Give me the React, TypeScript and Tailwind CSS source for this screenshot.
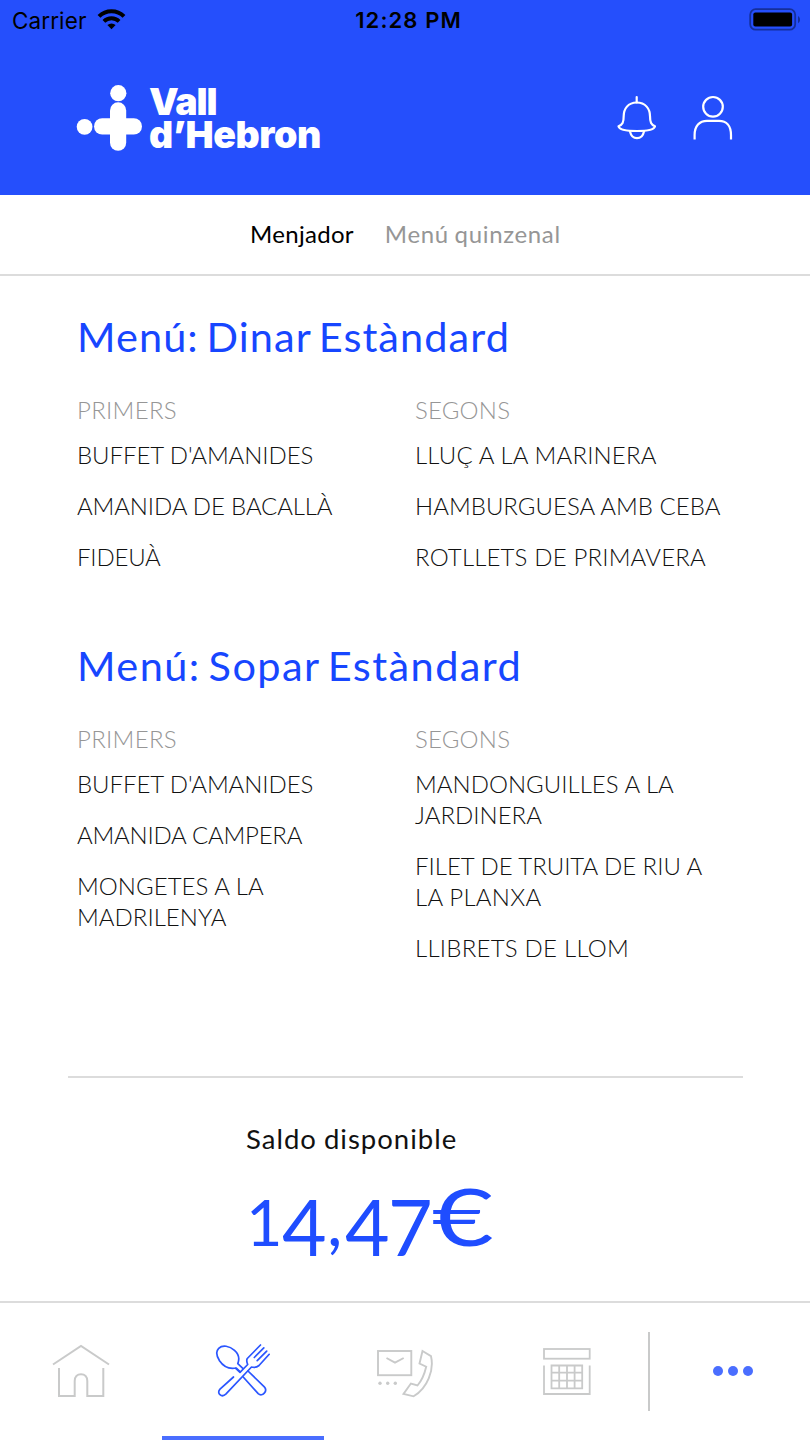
import type { ReactNode } from "react";

type Line = { text: string; cls: string };
type Dish = Line[];

type Menu = { title: string; titleCls: string; firsts: Dish[]; seconds: Dish[] };

const menus: Menu[] = [
  {
    title: "Menú: Dinar Estàndard",
    titleCls: "tracking-[1.07px] [word-spacing:-4px]",
    firsts: [
      [{ text: "BUFFET D'AMANIDES", cls: "tracking-[-0.08px]" }],
      [{ text: "AMANIDA DE BACALLÀ", cls: "tracking-[-0.14px]" }],
      [{ text: "FIDEUÀ", cls: "tracking-[-0.2px]" }],
    ],
    seconds: [
      [{ text: "LLUÇ A LA MARINERA", cls: "tracking-[0.16px]" }],
      [{ text: "HAMBURGUESA AMB CEBA", cls: "tracking-[0.02px]" }],
      [{ text: "ROTLLETS DE PRIMAVERA", cls: "tracking-[0.17px]" }],
    ],
  },
  {
    title: "Menú: Sopar Estàndard",
    titleCls: "tracking-[1.42px] [word-spacing:-4px]",
    firsts: [
      [{ text: "BUFFET D'AMANIDES", cls: "tracking-[-0.08px]" }],
      [{ text: "AMANIDA CAMPERA", cls: "tracking-[-0.24px]" }],
      [
        { text: "MONGETES A LA", cls: "tracking-[0.04px]" },
        { text: "MADRILENYA", cls: "tracking-[0.02px]" },
      ],
    ],
    seconds: [
      [
        { text: "MANDONGUILLES A LA", cls: "tracking-[0.02px]" },
        { text: "JARDINERA", cls: "tracking-[0px]" },
      ],
      [
        { text: "FILET DE TRUITA DE RIU A", cls: "tracking-[-0.02px]" },
        { text: "LA PLANXA", cls: "tracking-[0.25px]" },
      ],
      [{ text: "LLIBRETS DE LLOM", cls: "tracking-[0.25px]" }],
    ],
  },
];

function Column({ label, labelCls, dishes }: { label: string; labelCls: string; dishes: Dish[] }) {
  return (
    <div>
      <h3 className={`text-[24px] leading-[31px] font-light text-[#969696] ${labelCls}`}>{label}</h3>
      <ul className="mt-[14px] flex flex-col gap-5">
        {dishes.map((dish) => (
          <li key={dish[0].text} className="text-[24px] leading-[31px] font-light text-[#111]">
            {dish.map((line) => (
              <span key={line.text} className={`block whitespace-nowrap ${line.cls}`}>
                {line.text}
              </span>
            ))}
          </li>
        ))}
      </ul>
    </div>
  );
}

function StatusBar() {
  return (
    <div className="flex h-10 items-center font-['Inter',sans-serif] text-black">
      <div className="flex flex-1 items-center pt-px pl-3">
        <span className="text-[22.5px] leading-[40px] tracking-[0.1px]">Carrier</span>
        <svg className="mb-px ml-[11px]" width="29" height="22" viewBox="0 0 29 22" fill="none">
          <path d="M2 7.3A17.7 17.7 0 0 1 27 7.3" stroke="#000" strokeWidth="4" />
          <path d="M6.9 12.4A10.7 10.7 0 0 1 22.1 12.4" stroke="#000" strokeWidth="3.8" />
          <path d="M10.4 16.1A5.9 5.9 0 0 1 18.6 16.1L14.5 20.3Z" fill="#000" />
        </svg>
      </div>
      <span className="pl-[4px] text-[22px] leading-[40px] font-semibold tracking-[1.1px]">12:28 PM</span>
      <div className="flex flex-1 justify-end pr-[9px]">
        <svg width="52" height="24" viewBox="0 0 52 24" fill="none">
          <rect x="1.2" y="1.2" width="45" height="20.5" rx="5.5" stroke="#152f9b" strokeWidth="1.8" />
          <rect x="4.3" y="4.5" width="38.8" height="14" rx="2" fill="#000" />
          <path d="M49 7.9C51.7 9.5 51.7 13.7 49 15.2Z" fill="#152f9b" />
        </svg>
      </div>
    </div>
  );
}

function Logo() {
  return (
    <div className="flex items-start">
      <svg width="66" height="67" viewBox="0 0 66 67" fill="#fff">
        <circle cx="42.3" cy="8.2" r="8.1" />
        <circle cx="8.6" cy="41.8" r="7.9" />
        <rect x="34" y="17.3" width="16.2" height="48.5" rx="8.1" />
        <rect x="18" y="33.2" width="48" height="16.4" rx="8.2" />
      </svg>
      <div className="ml-[7px] flex flex-col font-['Inter',sans-serif] text-[37.5px] leading-[33px] font-black text-white">
        <span className="tracking-[-1.1px]">Vall</span>
        <span className="tracking-[-0.45px]">d’Hebron</span>
      </div>
    </div>
  );
}

function BellIcon() {
  return (
    <svg width="40" height="46" viewBox="0 0 40 46" fill="none" stroke="#fff" strokeWidth="2.2" strokeLinecap="round" strokeLinejoin="round">
      <path d="M19.7 2V7.5" />
      <path d="M19.7 7.5C11 7.5 6.7 14 6.7 21C6.7 27.5 5.5 29.8 1.5 31.2C2.2 34.4 9 36 20 36S37.3 34.4 38 31.2C34.2 29.8 33 27.5 33 21C33 14 28.5 7.5 19.7 7.5Z" />
      <path d="M13 36.5C14 41 16.7 43.2 20 43.2S26 41 27 36.5" />
    </svg>
  );
}

function UserIcon() {
  return (
    <svg width="40" height="46" viewBox="0 0 40 46" fill="none" stroke="#fff" strokeWidth="2.2">
      <circle cx="20" cy="11.8" r="9.8" />
      <path d="M1.6 44.5V40C1.6 31 6.5 25.8 14 25.8H26C33.5 25.8 38 31 38 40V44.5" />
    </svg>
  );
}

function HomeIcon() {
  return (
    <svg className="mt-[2px]" width="58" height="54" viewBox="0 0 58 54" fill="none" stroke="#c9caca" strokeWidth="2">
      <path d="M1 20.5L29 2L57 20.5" />
      <path d="M7 24V52H22.7V37C22.7 32.8 25.2 30.2 29 30.2S35.3 32.8 35.3 37V52H51.3V24" />
    </svg>
  );
}

function CutleryIcon() {
  return (
    <svg width="56" height="54" viewBox="0 0 56 54" fill="none" stroke="#2b56ff" strokeWidth="1.7" strokeLinecap="round" strokeLinejoin="round">
      <path d="M25 28.6L21.3 25C14 26.5 8 23 4.5 17.8C1.5 13 1 8 3.7 5.3C7.5 1.6 14.5 2.8 19.5 7.3C23.5 10.8 25.2 14.5 22.8 20.6L27.8 25.4" />
      <path d="M18.5 34L5 46.2C1.2 50.3 6.7 55 10.8 51.2L36.5 24C39 24.7 41.8 24.5 44 22.5L54.2 11.3" />
      <path d="M45.5 2L32.3 15.5C31.2 17 32 19.7 32.7 21.5L25 29.3L20.7 25.3" />
      <path d="M48.8 4.9L39.3 14.5M51.7 8.1L42.2 17.6" />
      <path d="M33 28L49.3 43.8C53 47.8 47.5 54.5 43.2 50.6L28.2 34" />
    </svg>
  );
}

function ContactIcon() {
  return (
    <svg className="mt-[5px]" width="58" height="50" viewBox="0 0 58 50" fill="none" stroke="#c9caca" strokeWidth="1.9">
      <rect x="2" y="3" width="33.3" height="24.2" />
      <path d="M10.5 10L19 14.6L27.7 10" />
      <g fill="#c9caca" stroke="none">
        <circle cx="4" cy="35.3" r="1.7" />
        <circle cx="11.7" cy="35.3" r="1.7" />
        <circle cx="19.3" cy="35.3" r="1.7" />
      </g>
      <path d="M46.5 3L55 8.2C58.3 22 51.5 40 37.6 48.3L27.5 45.9L34.9 35.5L41.5 37.5C45.8 32.4 48.5 26 50.2 18.7L43.5 15.5Z" />
    </svg>
  );
}

function CalendarIcon() {
  return (
    <svg className="mt-[2px]" width="48" height="49" viewBox="0 0 48 49" fill="none" stroke="#c9caca" strokeWidth="1.8">
      <rect x="1" y="2" width="45.7" height="9.7" />
      <path d="M1 18.5V47H46.7V18.5" />
      <path d="M8.5 18.5H39.2V41.4H8.5ZM16.2 18.5V41.4M24 18.5V41.4M31.6 18.5V41.4M8.5 25.7H39.2M8.5 33.6H39.2" />
    </svg>
  );
}

function NavItem({ active, children }: { active?: boolean; children: ReactNode }) {
  return (
    <button className="flex h-full w-[162px] flex-col items-center justify-between">
      <span className="flex h-[134px] items-center justify-center">{children}</span>
      {active && <span className="h-1 w-full bg-[#4a6eff]" />}
    </button>
  );
}

export default function App() {
  return (
    <div className="flex h-[1440px] w-[810px] flex-col overflow-hidden bg-white font-['Lato',sans-serif]">
      <header className="h-[195px] bg-[#254ffc]">
        <StatusBar />
        <div className="flex items-start justify-between pt-[45px] pr-[77px] pl-[76px]">
          <Logo />
          <div className="flex gap-[36px] pt-[10px]">
            <BellIcon />
            <UserIcon />
          </div>
        </div>
      </header>

      <nav className="flex h-[81px] gap-[31px] border-b-2 border-[#dcdcdc] pt-[23px] pl-[250px] text-[24px] leading-[32px]">
        <span className="tracking-[0.3px] text-black">Menjador</span>
        <span className="tracking-[0.65px] [word-spacing:-1px] text-[#969696]">Menú quinzenal</span>
      </nav>

      <main className="flex h-[801px] flex-col gap-[68px] px-[77px] pt-[35px]">
        {menus.map((menu) => (
          <section key={menu.title}>
            <h2 className={`text-[41.5px] leading-[50px] whitespace-nowrap text-[#1746ff] ${menu.titleCls}`}>{menu.title}</h2>
            <div className="mt-[33px] grid grid-cols-[338px_1fr]">
              <Column label="PRIMERS" labelCls="tracking-[0.3px]" dishes={menu.firsts} />
              <Column label="SEGONS" labelCls="tracking-[0.2px]" dishes={menu.seconds} />
            </div>
          </section>
        ))}
      </main>

      <section className="mx-[68px] h-[225px] w-[675px] border-t-2 border-[#dcdcdc] pt-[44px] pl-[178px]">
        <p className="text-[27.5px] leading-[34px] tracking-[1px] [word-spacing:-1px] text-[#111]">Saldo disponible</p>
        <p className="mt-[10px] flex h-[92px] items-baseline leading-[100px] text-[#1f4dff]">
          <span className="w-[36px] text-[63px]">1</span>
          <span className="w-[45px] translate-y-[10px] text-[77px]">4</span>
          <span className="w-[18px] text-[68px]">,</span>
          <span className="w-[43px] translate-y-[10px] text-[77px]">4</span>
          <span className="w-[44px] translate-y-[10px] text-[77px]">7</span>
          <span className="origin-left scale-x-135 text-[79px]">€</span>
        </p>
      </section>

      <footer className="flex h-[139px] border-t-2 border-[#dcdcdc]">
        <NavItem>
          <HomeIcon />
        </NavItem>
        <NavItem active>
          <CutleryIcon />
        </NavItem>
        <NavItem>
          <ContactIcon />
        </NavItem>
        <NavItem>
          <CalendarIcon />
        </NavItem>
        <div className="mt-[29px] h-[79px] w-[2px] bg-[#c9caca]" />
        <button className="flex h-[136px] flex-1 items-center justify-center gap-[5px] pl-[5px]">
          <span className="size-[10px] rounded-full bg-[#4a6eff]" />
          <span className="size-[10px] rounded-full bg-[#4a6eff]" />
          <span className="size-[10px] rounded-full bg-[#4a6eff]" />
        </button>
      </footer>
    </div>
  );
}
